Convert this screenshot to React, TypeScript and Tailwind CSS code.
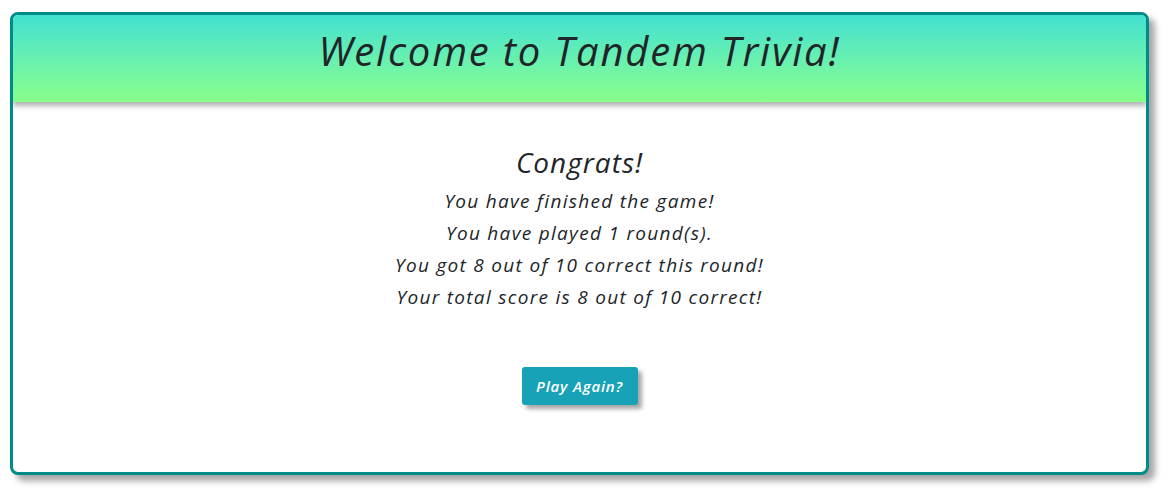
export default function App() {
  const font = { fontFamily: '"Open Sans", "Noto Sans", sans-serif' };
  return (
    <div className="min-h-[498px] bg-white pl-[10px] pt-[12px]" style={font}>
      <div className="w-[1139px] h-[463px] rounded-[8px] border-[3px] border-[#008b8b] bg-white shadow-[6px_6px_6px_rgba(0,0,0,0.35)] overflow-hidden flex flex-col">
        <header className="h-[87px] bg-gradient-to-b from-[#40e0d0] to-[#88ff88] shadow-[0_4px_5px_rgba(0,0,0,0.3)] flex items-start justify-center pt-[12px]">
          <h1 className="text-[40px] leading-[48px] italic tracking-[1.8px] text-[#212529]">Welcome to Tandem Trivia!</h1>
        </header>
        <main className="flex flex-col items-center pt-[44px] text-[#212529] italic">
          <h2 className="text-[28px] leading-[32px] tracking-[1px]">Congrats!</h2>
          <div className="mt-[7px] flex flex-col items-center text-[19px] leading-[32px] tracking-[1.3px]">
            <p>You have finished the game!</p>
            <p>You have played 1 round(s).</p>
            <p>You got 8 out of 10 correct this round!</p>
            <p>Your total score is 8 out of 10 correct!</p>
          </div>
          <button className="mt-[54px] h-[38px] w-[116px] rounded-[3px] bg-[#17a2b8] text-white text-[15px] font-semibold italic tracking-[0.8px] shadow-[4px_4px_4px_rgba(0,0,0,0.35)]">
            Play Again?
          </button>
        </main>
      </div>
    </div>
  );
}
